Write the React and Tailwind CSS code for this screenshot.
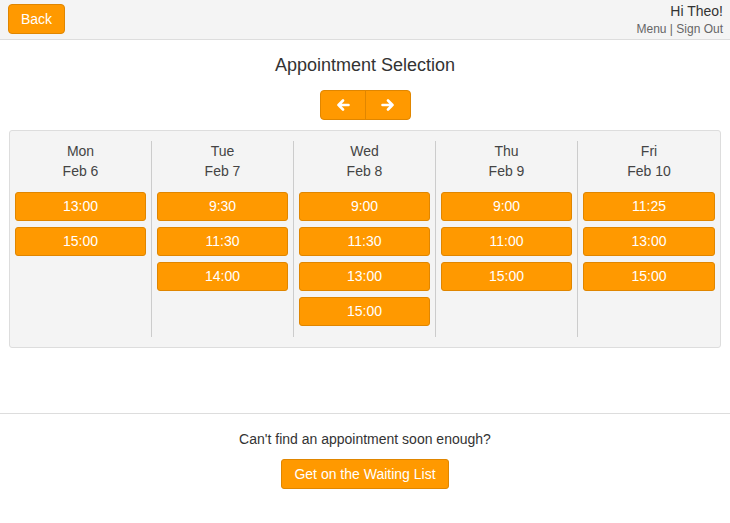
import { useState } from "react";

const days = [
  { day: "Mon", date: "Feb 6", slots: ["13:00", "15:00"] },
  { day: "Tue", date: "Feb 7", slots: ["9:30", "11:30", "14:00"] },
  { day: "Wed", date: "Feb 8", slots: ["9:00", "11:30", "13:00", "15:00"] },
  { day: "Thu", date: "Feb 9", slots: ["9:00", "11:00", "15:00"] },
  { day: "Fri", date: "Feb 10", slots: ["11:25", "13:00", "15:00"] },
];

function Arrow({ dir }) {
  return (
    <svg width="14" height="12" viewBox="0 0 14 12" className={dir === "right" ? "rotate-180" : ""}>
      <path d="M7 1.5 L2.5 6 L7 10.5 M2.5 6 H12.5" fill="none" stroke="white" strokeWidth="2.6" strokeLinecap="round" strokeLinejoin="round" />
    </svg>
  );
}

export default function App() {
  const [picked, setPicked] = useState(null);

  return (
    <div className="min-h-screen bg-white text-[#333] font-['Liberation_Sans',Arial,sans-serif] text-[14px]">
      {/* Header */}
      <div className="h-[40px] bg-[#f4f4f4] border-b border-[#ddd] flex items-start justify-between pl-[8px] pr-[7px]">
        <button className="mt-[4px] h-[30px] px-[12px] bg-[#ff9900] border border-[#e08600] rounded-[4px] text-white text-[14px] leading-none">
          Back
        </button>
        <div className="flex flex-col items-end pt-[3px]">
          <span className="text-[14px] leading-[17px] text-[#333]">Hi Theo!</span>
          <span className="text-[12px] leading-[16px] text-[#666] mt-[1px]">Menu | Sign Out</span>
        </div>
      </div>

      {/* Title */}
      <h1 className="text-center text-[18px] leading-[22px] text-[#333] mt-[14px]">Appointment Selection</h1>

      <div className="flex justify-center mt-[14px]">
        <div className="flex h-[30px] bg-[#ff9900] border border-[#e08600] rounded-[4px]">
          <button className="w-[45px] flex items-center justify-center border-r border-[#e08600]">
            <Arrow dir="left" />
          </button>
          <button className="w-[44px] flex items-center justify-center">
            <Arrow dir="right" />
          </button>
        </div>
      </div>

      {/* Schedule panel */}
      <div className="mx-[9px] mt-[10px] bg-[#f4f4f4] border border-[#ddd] rounded-[3px] grid grid-cols-[141px_142px_142px_142px_1fr] py-[10px]">
        {days.map((d, i) => (
          <div
            key={d.day}
            className={`px-[5px] pb-[11px] ${i > 0 ? "border-l border-[#ccc]" : ""}`}
          >
            <div className="mb-[11px] text-center text-[14px] leading-[20px] text-[#444]">
              <div>{d.day}</div>
              <div>{d.date}</div>
            </div>
            <div className="flex flex-col gap-[6px]">
              {d.slots.map((s) => (
                <button
                  key={s}
                  onClick={() => setPicked(d.day + s)}
                  className={`h-[29px] w-full rounded-[3px] border border-[#e08600] text-white text-[14px] ${
                    picked === d.day + s ? "bg-[#e68a00]" : "bg-[#ff9900]"
                  }`}
                >
                  {s}
                </button>
              ))}
            </div>
          </div>
        ))}
      </div>

      {/* Footer */}
      <div className="mt-[65px] border-t border-[#ddd] flex flex-col items-center pt-[16px]">
        <p className="text-[14px] leading-[18px] text-[#333]">Can't find an appointment soon enough?</p>
        <button className="mt-[11px] h-[30px] px-[12px] bg-[#ff9900] border border-[#e08600] rounded-[3px] text-white text-[14px]">
          Get on the Waiting List
        </button>
      </div>
    </div>
  );
}
